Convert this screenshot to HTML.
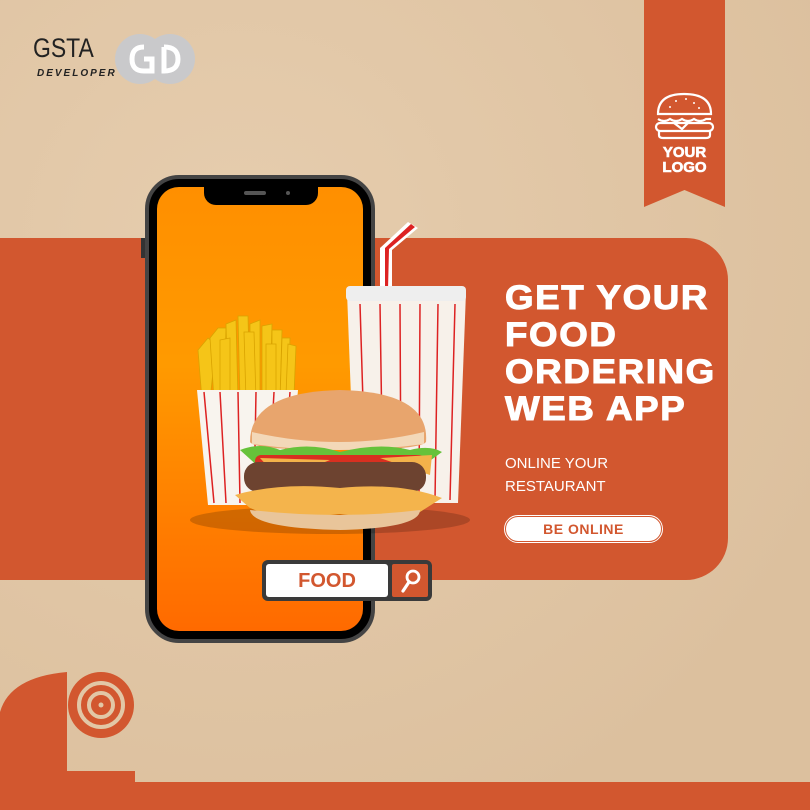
<!DOCTYPE html>
<html><head><meta charset="utf-8"><style>
html,body{margin:0;padding:0}
body{width:810px;height:810px;position:relative;overflow:hidden;background:#e2c7a6;font-family:"Liberation Sans",sans-serif}
.a{position:absolute}
.h{color:#fff;font-weight:900;font-size:34px;line-height:37px;letter-spacing:1.5px;font-family:"Liberation Sans",sans-serif;transform:scaleX(1.08);transform-origin:left;-webkit-text-stroke:1px #fff}
</style></head><body>
<div class="a" style="inset:0;background:radial-gradient(ellipse at 30% 30%,#e6cdae,#dcc09e 80%)"></div>
<div class="a" style="left:0;top:238px;width:728px;height:342px;background:#d2572f;border-radius:0 42px 42px 0"></div>
<svg class="a" style="left:644px;top:0" width="82" height="210"><path d="M0 0H81V207L40.5 190L0 207Z" fill="#d2572f"/>
<g fill="none" stroke="#fff" stroke-width="2.2"><path d="M14 114 Q14 94 40 94 Q67 94 67 114Z"/><path d="M14 119 Q20 123 26 119 Q32 123 38 119 Q44 123 50 119 Q56 123 62 119 L67 119"/><rect x="12" y="123" width="57" height="8" rx="4"/><path d="M15 131 V135 Q15 138 19 138 H62 Q66 138 66 135 V131"/><path d="M30 123 L38 129 L44 123"/></g>
<g fill="#fff"><circle cx="32" cy="101" r="1"/><circle cx="42" cy="99" r="1"/><circle cx="50" cy="103" r="1"/><circle cx="26" cy="107" r="1"/><circle cx="55" cy="108" r="1"/></g>
<text x="40.5" y="157" text-anchor="middle" fill="#fff" font-size="15" font-weight="900" font-family="Liberation Sans" stroke="#fff" stroke-width=".6">YOUR</text>
<text x="40.5" y="172" text-anchor="middle" fill="#fff" font-size="15" font-weight="900" font-family="Liberation Sans" stroke="#fff" stroke-width=".6">LOGO</text></svg>
<div class="a" style="left:33px;top:33px;font-size:27px;color:#222;transform:scaleX(.85);transform-origin:left">GSTA</div>
<div class="a" style="left:37px;top:68px;font-size:10px;font-weight:bold;font-style:italic;color:#222;letter-spacing:2px">DEVELOPER</div>
<svg class="a" style="left:114px;top:33px" width="84" height="52"><circle cx="26" cy="26" r="25" fill="#c9c9cb"/><circle cx="56" cy="26" r="25" fill="#c9c9cb"/><path d="M30 14 Q18 14 18 26 Q18 38 30 38 L38 38 L38 26 L30 26" fill="none" stroke="#fff" stroke-width="5"/><path d="M50 14 V38 Q64 38 64 26 Q64 14 50 14" fill="none" stroke="#fff" stroke-width="5"/></svg>
<div class="a" style="left:145px;top:175px;width:222px;height:460px;background:#000;border:4px solid #444;border-radius:34px"></div>
<div class="a" style="left:157px;top:187px;width:206px;height:444px;border-radius:22px;background:linear-gradient(180deg,#ff8f00,#ff9a00 40%,#ff6a00)"></div>
<div class="a" style="left:204px;top:183px;width:114px;height:22px;background:#000;border-radius:0 0 12px 12px"></div>
<div class="a" style="left:244px;top:191px;width:22px;height:4px;background:#555;border-radius:2px"></div>
<div class="a" style="left:286px;top:191px;width:4px;height:4px;background:#555;border-radius:2px"></div>
<div class="a" style="left:141px;top:238px;width:4px;height:20px;background:#333"></div>
<svg class="a" style="left:180px;top:220px" width="300" height="320">
<ellipse cx="150" cy="300" rx="140" ry="14" fill="#000" opacity=".18"/>
<path d="M228 2 L238 8 L212 30 L212 70 L200 70 L200 28Z" fill="#fff"/><path d="M231 4 L235 7 L209 29 L208 70 L205 70 L205 28Z" fill="#d22"/>
<path d="M167 72 H286 L278 283 H175Z" fill="#f7f1ea"/>
<rect x="166" y="66" width="120" height="15" rx="4" fill="#eee"/>
<g stroke="#d22" stroke-width="1.5"><path d="M180 84 L186 280M200 84 L203 280M220 84 L221 280M240 84 L239 280M258 84 L255 280M275 84 L270 280"/></g>
<g fill="#f5c518" stroke="#d9a300" stroke-width=".8">
<path d="M18 130 L28 118 L36 124 L30 180 L22 180Z"/><path d="M30 118 L38 108 L46 108 L44 180 L34 180Z"/><path d="M46 104 L56 100 L58 180 L48 180Z"/><path d="M58 96 L68 96 L70 180 L60 180Z"/><path d="M70 104 L80 100 L80 180 L70 180Z"/><path d="M82 106 L92 104 L90 180 L82 180Z"/><path d="M92 110 L102 110 L100 180 L92 180Z"/><path d="M102 118 L110 118 L108 180 L100 180Z"/><path d="M108 124 L116 126 L114 175 L106 175Z"/><path d="M40 120 L50 118 L50 180 L40 180Z"/><path d="M64 112 L74 112 L76 180 L66 180Z"/><path d="M86 124 L96 124 L96 180 L86 180Z"/></g>
<path d="M17 170 L118 170 L108 285 L28 285Z" fill="#f8f4ee"/>
<g stroke="#d22" stroke-width="1.5"><path d="M24 172 L34 283M40 172 L46 283M58 172 L60 283M76 172 L74 283M94 172 L88 283M110 172 L102 283"/></g>
<path d="M70 222 Q70 172 160 170 Q250 172 246 222 Q240 230 160 230 Q74 230 70 222Z" fill="#e8a56d"/>
<path d="M72 212 Q160 232 244 212 L244 224 Q160 236 72 224Z" fill="#f3d8b8"/>
<path d="M60 230 Q80 222 100 230 Q130 222 160 232 Q200 222 230 230 Q250 225 262 232 L240 248 L80 248Z" fill="#66c23a"/>
<rect x="75" y="235" width="170" height="12" rx="6" fill="#d83020"/>
<path d="M80 238 L150 240 L100 260Z M200 238 L252 235 L250 255Z" fill="#f3b24a"/>
<rect x="64" y="242" width="182" height="30" rx="14" fill="#6d4330"/>
<path d="M55 275 Q100 262 160 268 Q220 262 262 278 L240 292 L210 300 L160 294 L100 300 L70 288Z" fill="#f4b44c"/>
<path d="M70 290 Q160 300 240 290 Q240 308 160 310 Q72 308 70 290Z" fill="#e9c59a"/>
</svg>
<div class="a h" style="left:505px;top:280px">GET YOUR<br>FOOD<br>ORDERING<br>WEB APP</div>
<div class="a" style="left:505px;top:452px;color:#fff;font-size:15px;line-height:23px">ONLINE YOUR<br>RESTAURANT</div>
<div class="a" style="left:505px;top:516px;width:155px;height:24px;background:#fff;border:1.5px solid #d2572f;outline:1.5px solid #fff;border-radius:13px;color:#d2572f;font-weight:900;font-size:14px;line-height:24px;text-align:center;letter-spacing:.5px">BE ONLINE</div>
<div class="a" style="left:262px;top:560px;width:170px;height:41px;background:#3a3a3a;border-radius:6px"></div>
<div class="a" style="left:266px;top:564px;width:122px;height:33px;background:#fff;border-radius:3px;color:#d2572f;font-weight:900;font-size:20px;line-height:34px;text-align:center">FOOD</div>
<div class="a" style="left:392px;top:564px;width:36px;height:33px;background:#d2572f;border-radius:2px"></div>
<svg class="a" style="left:392px;top:564px" width="36" height="33"><circle cx="21" cy="13" r="6" fill="none" stroke="#fff" stroke-width="2.8"/><path d="M17 18 L11 27" stroke="#fff" stroke-width="3.2" stroke-linecap="round"/></svg>
<div class="a" style="left:0;top:782px;width:810px;height:28px;background:#d2572f"></div>
<svg class="a" style="left:0;top:672px" width="140" height="112"><path d="M67 0 V104 H135 Q134 110 122 112 H0 V40 Q10 5 67 0Z" fill="#d2572f"/><rect x="67" y="99" width="68" height="13" fill="#d2572f"/><circle cx="101" cy="33" r="33" fill="#d2572f"/><circle cx="101" cy="33" r="22" fill="none" stroke="#e2c7a6" stroke-width="4"/><circle cx="101" cy="33" r="12" fill="none" stroke="#e2c7a6" stroke-width="4"/><circle cx="101" cy="33" r="2.5" fill="#e2c7a6"/></svg>
</body></html>
